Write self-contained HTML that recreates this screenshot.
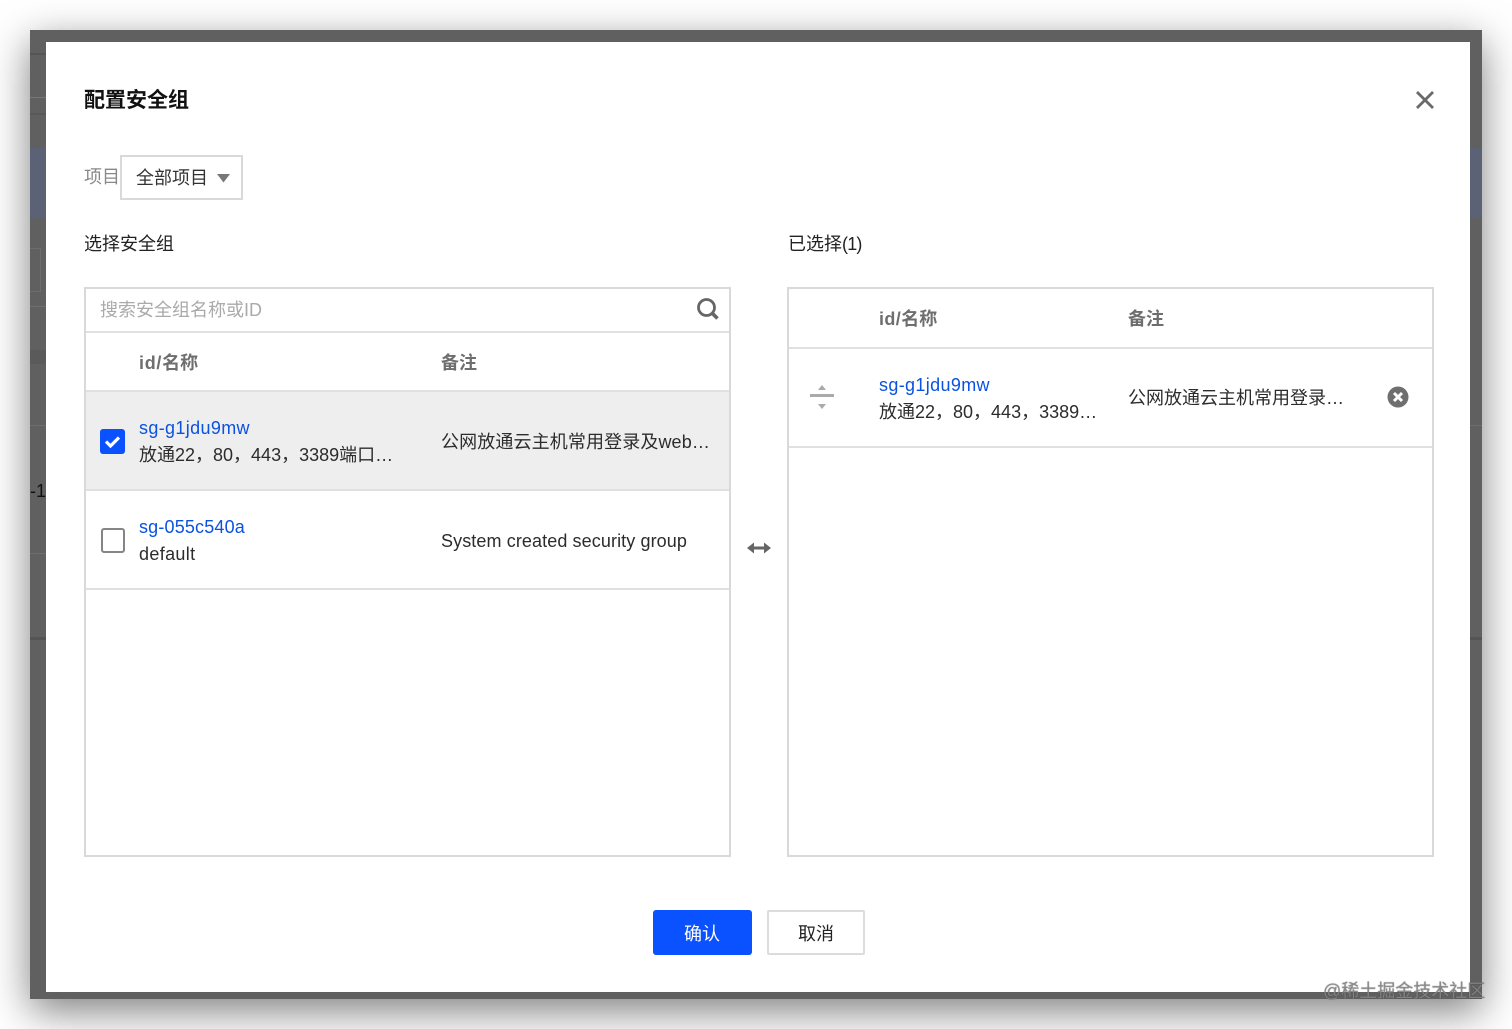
<!DOCTYPE html>
<html><head><meta charset="utf-8"><style>
html,body{margin:0;padding:0;width:1512px;height:1029px;overflow:hidden;background:#fff}
*{box-sizing:border-box}
body{font-family:"Liberation Sans","Noto Sans CJK SC",sans-serif;font-size:18px;color:#2c2c2c;position:relative;filter:blur(.35px)}
.a{position:absolute}
.t{position:absolute;white-space:nowrap;line-height:26px;height:26px}
.l{letter-spacing:.35px}
.b{color:#0a52e0}
.h{color:#6e6e6e;font-weight:700}
.line{position:absolute;height:2px;background:#e0e0e0}
.box{position:absolute;border:2px solid #d9d9d9;background:#fff}
</style></head><body>
<div class="a" style="left:30px;top:30px;width:1452px;height:969px;background:#606060;box-shadow:0 12px 38px rgba(0,0,0,.5)"></div>
<!-- faint background strips -->
<div class="a" style="left:30px;top:53px;width:16px;height:2px;background:#555"></div>
<div class="a" style="left:30px;top:97px;width:16px;height:1px;background:#777"></div>
<div class="a" style="left:30px;top:113px;width:16px;height:2px;background:#585858"></div>
<div class="a" style="left:30px;top:148px;width:16px;height:70px;background:#5c6275"></div>
<div class="a" style="left:1470px;top:148px;width:12px;height:70px;background:#5c6275"></div>
<div class="a" style="left:30px;top:248px;width:11px;height:44px;border:1px solid #6d6d6d;border-left:0"></div>
<div class="a" style="left:30px;top:306px;width:16px;height:1px;background:#6e6e6e"></div>
<div class="a" style="left:30px;top:350px;width:16px;height:14px;background:#5a5a5a"></div>
<div class="a" style="left:30px;top:425px;width:16px;height:1px;background:#6e6e6e"></div>
<div class="a" style="left:30px;top:553px;width:16px;height:1px;background:#6e6e6e"></div>
<div class="a" style="left:30px;top:637px;width:16px;height:3px;background:#545454"></div>
<div class="a" style="left:1470px;top:637px;width:12px;height:3px;background:#545454"></div>
<div class="a" style="left:1470px;top:425px;width:12px;height:1px;background:#6e6e6e"></div>
<div class="t" style="left:30px;top:478px;width:16px;overflow:hidden;color:#111">-1</div>
<!-- modal -->
<div class="a" style="left:46px;top:42px;width:1424px;height:950px;background:#fff"></div>

<div class="t" style="left:84px;top:88px;font-size:21px;font-weight:700;color:#111">配置安全组</div>
<svg class="a" style="left:1414px;top:89px" width="22" height="22" viewBox="0 0 22 22"><path d="M3 3L19 19M19 3L3 19" stroke="#6a6a6a" stroke-width="2.8" fill="none"/></svg>

<div class="t" style="left:84px;top:164px;color:#888">项目</div>
<div class="box" style="left:120px;top:155px;width:123px;height:45px"></div>
<div class="t" style="left:136px;top:165px;color:#333">全部项目</div>
<svg class="a" style="left:217px;top:174px" width="13" height="9"><path d="M0 0H13L6.5 8.5Z" fill="#777"/></svg>

<div class="t" style="left:84px;top:231px;color:#222">选择安全组</div>
<div class="t" style="left:788px;top:231px;color:#222">已选择<span style="letter-spacing:-.8px">(1)</span></div>

<!-- left panel -->
<div class="box" style="left:84px;top:287px;width:647px;height:570px"></div>
<div class="t" style="left:100px;top:297px;color:#aaa">搜索安全组名称或ID</div>
<svg class="a" style="left:696px;top:297px" width="24" height="24" viewBox="0 0 24 24"><circle cx="10.5" cy="10.5" r="8" fill="none" stroke="#666" stroke-width="2.8"/><path d="M16.5 16.5L21.5 21.5" stroke="#666" stroke-width="3.6"/></svg>
<div class="line" style="left:86px;top:331px;width:643px"></div>
<div class="t h" style="left:139px;top:350px"><span style="letter-spacing:.7px">id/</span>名称</div>
<div class="t h" style="left:441px;top:350px">备注</div>
<div class="a" style="left:86px;top:391px;width:643px;height:99px;background:#eeeeee"></div>
<div class="line" style="left:86px;top:390px;width:643px"></div>
<div class="line" style="left:86px;top:489px;width:643px"></div>
<div class="line" style="left:86px;top:588px;width:643px"></div>

<div class="a" style="left:100px;top:429px;width:25px;height:25px;border-radius:3px;background:#0a52ff"></div>
<svg class="a" style="left:100px;top:429px" width="25" height="25"><path d="M6 12.5L10.5 17L19 8.5" fill="none" stroke="#fff" stroke-width="3.2"/></svg>
<div class="t b l" style="left:139px;top:415px">sg-g1jdu9mw</div>
<div class="t" style="left:139px;top:442px">放通22，80，443，3389端口…</div>
<div class="t" style="left:441px;top:429px;letter-spacing:.12px">公网放通云主机常用登录及web…</div>

<div class="a" style="left:101px;top:528px;width:24px;height:25px;border-radius:3px;border:2px solid #858585;background:#fff"></div>
<div class="t b" style="left:139px;top:514px;letter-spacing:.17px">sg-055c540a</div>
<div class="t l" style="left:139px;top:541px">default</div>
<div class="t" style="left:441px;top:528px;letter-spacing:.1px">System created security group</div>

<!-- arrow -->
<svg class="a" style="left:747px;top:541px" width="24" height="14" viewBox="0 0 24 14"><path d="M0 7L7 1.5V5.5H17V1.5L24 7L17 12.5V8.5H7V12.5Z" fill="#666"/></svg>

<!-- right panel -->
<div class="box" style="left:787px;top:287px;width:647px;height:570px"></div>
<div class="t h" style="left:879px;top:306px"><span style="letter-spacing:.4px">id/</span>名称</div>
<div class="t h" style="left:1128px;top:306px">备注</div>
<div class="line" style="left:789px;top:347px;width:643px"></div>
<div class="line" style="left:789px;top:446px;width:643px"></div>
<svg class="a" style="left:810px;top:384px" width="24" height="26" viewBox="0 0 24 26"><path d="M8 6L12 1L16 6Z" fill="#aaa"/><rect x="0" y="10" width="24" height="3" fill="#aaa"/><path d="M8 20H16L12 25Z" fill="#aaa"/></svg>
<div class="t b l" style="left:879px;top:372px">sg-g1jdu9mw</div>
<div class="t" style="left:879px;top:399px">放通22，80，443，3389…</div>
<div class="t" style="left:1128px;top:385px">公网放通云主机常用登录…</div>
<svg class="a" style="left:1387px;top:386px" width="22" height="22" viewBox="0 0 22 22"><circle cx="11" cy="11" r="10.5" fill="#6f6f6f"/><path d="M7 7L15 15M15 7L7 15" stroke="#fff" stroke-width="3"/></svg>

<!-- buttons -->
<div class="a" style="left:653px;top:910px;width:99px;height:45px;background:#0a52ff;border-radius:3px"></div>
<div class="t" style="left:684px;top:921px;color:#fff">确认</div>
<div class="a" style="left:767px;top:910px;width:98px;height:45px;background:#fff;border:2px solid #dcdcdc;border-radius:2px"></div>
<div class="t" style="left:798px;top:921px;color:#222">取消</div>

<!-- watermark -->
<div class="t" style="left:1323px;top:978px;font-size:18px;color:rgba(140,140,140,.85);text-shadow:0 0 1px rgba(50,50,50,.7)">@稀土掘金技术社区</div>
</body></html>
